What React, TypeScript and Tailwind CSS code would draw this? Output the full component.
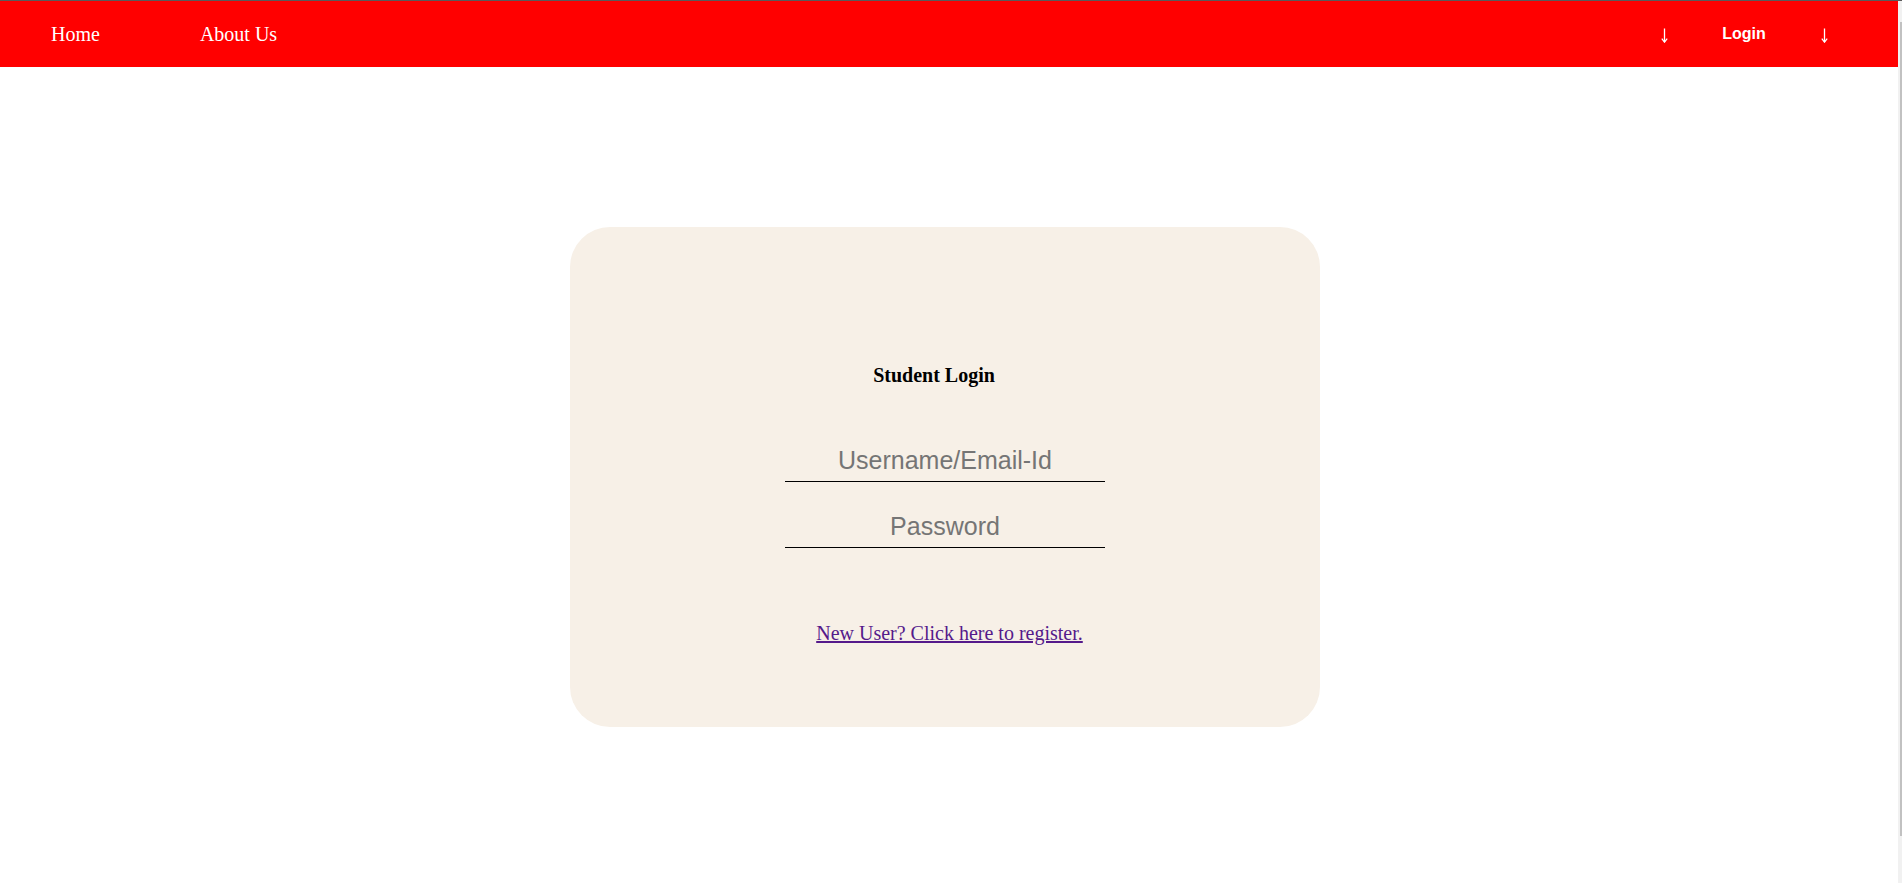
import { useState } from "react";

const serif = { fontFamily: '"Liberation Serif", "Times New Roman", serif' };
const sans = { fontFamily: '"Liberation Sans", Arial, sans-serif' };

const DownArrow = () => (
  <svg width="7" height="15" viewBox="0 0 7 15" className="inline-block" fill="none">
    <path d="M3.5 0.5V14" stroke="#ffffff" strokeWidth="1.3" />
    <path d="M0.8 10.6L3.5 14.2L6.2 10.6" stroke="#ffffff" strokeWidth="1.2" />
  </svg>
);

const NavBar = () => {
  return (
    <nav className="flex flex-row items-center justify-between h-[66px] bg-[#ff0000] text-white">
      <ul className="flex flex-row items-center pl-[51px] text-[20px] leading-[23px]" style={serif}>
        <li className="cursor-pointer">Home</li>
        <li className="ml-[100px] cursor-pointer">About Us</li>
      </ul>
      <ul className="flex flex-row items-center pr-[34px] text-[16px] leading-[18px] font-bold" style={sans}>
        <li className="flex justify-center w-[80px] pt-[3px]">
          <DownArrow />
        </li>
        <li className="w-[80px] text-center cursor-pointer">Login</li>
        <li className="flex justify-center w-[80px] pt-[3px]">
          <DownArrow />
        </li>
      </ul>
    </nav>
  );
};

const LoginCard = () => {
  const [user, setUser] = useState("");
  const [pass, setPass] = useState("");

  return (
    <div className="flex flex-col items-center w-[750px] h-[500px] bg-[#f7f0e7] rounded-[40px] pt-[137px]">
      <h3 className="text-[20px] leading-[23px] font-bold text-black mr-[22px]" style={serif}>
        Student Login
      </h3>
      <input
        type="text"
        value={user}
        onChange={(e) => setUser(e.target.value)}
        placeholder="Username/Email-Id"
        className="mt-[52px] w-[320px] h-[43px] bg-transparent border-0 border-b border-black text-center text-[25px] text-black placeholder:text-[#757575] outline-none"
        style={sans}
      />
      <input
        type="password"
        value={pass}
        onChange={(e) => setPass(e.target.value)}
        placeholder="Password"
        className="mt-[23px] w-[320px] h-[43px] bg-transparent border-0 border-b border-black text-center text-[25px] text-black placeholder:text-[#757575] outline-none"
        style={sans}
      />
      <a
        href="#"
        className="mt-[74px] ml-[9px] text-[20px] leading-[23px] text-[#551a8b] underline"
        style={serif}
      >
        New User? Click here to register.
      </a>
    </div>
  );
};

export default function App() {
  return (
    <div className="flex flex-col h-[883px] bg-white border-t border-[#5a5a5a] overflow-hidden">
      <div className="flex flex-row flex-1">
        <div className="flex flex-col flex-1">
          <NavBar />
          <div className="flex flex-row justify-center pt-[160px] pr-[8px]">
            <LoginCard />
          </div>
        </div>
        {/* scrollbar strip */}
        <div className="flex flex-row justify-end w-[4px] bg-[#f1f1f1]">
          <div className="w-[2px] h-[814px] mt-[21px] bg-[#c1c1c1]" />
        </div>
      </div>
    </div>
  );
}
